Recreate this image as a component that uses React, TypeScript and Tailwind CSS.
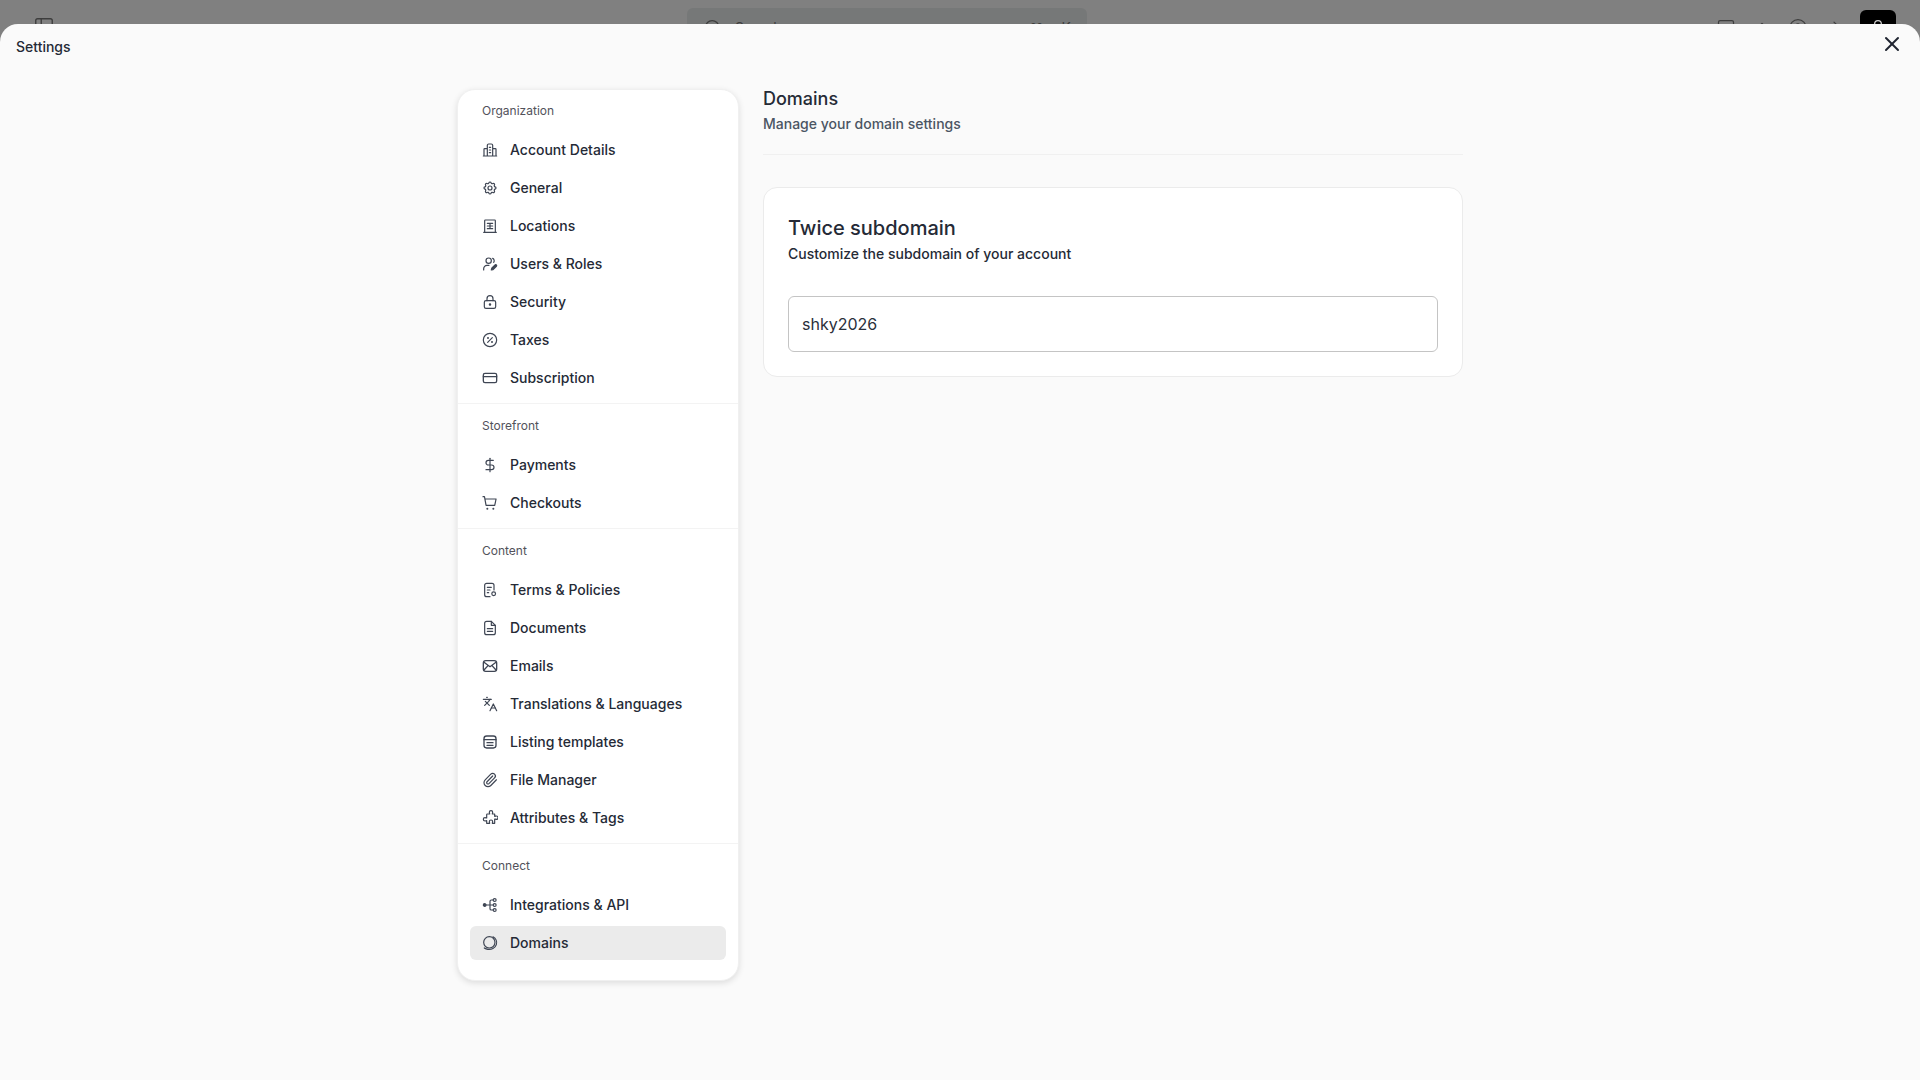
import type { ReactNode } from 'react';
import { Languages, Paperclip, DollarSign, Search, X, PanelLeft, SquarePlus, CircleHelp, ArrowRight, ChevronsUpDown, User } from 'lucide-react';

function Icon({ children, sw = 1.8 }: { children: ReactNode; sw?: number }) {
  return (
    <svg viewBox="0 0 24 24" fill="none" stroke="currentColor" strokeWidth={sw} strokeLinecap="round" strokeLinejoin="round" className="w-4 h-4 shrink-0">
      {children}
    </svg>
  );
}

const sections: { label: string; items: { name: string; icon: ReactNode }[] }[] = [
  {
    label: 'Organization',
    items: [
      { name: 'Account Details', icon: <Icon><path d="M2 21h20M8 21V5a2 2 0 0 1 2-2h4a2 2 0 0 1 2 2v16M8 10H4a1 1 0 0 0-1 1v10M16 10h4a1 1 0 0 1 1 1v10M11 8h2M11 12h2M11 16h2" /></Icon> },
      { name: 'General', icon: <Icon><path d="M10.325 4.317c.426-1.756 2.924-1.756 3.35 0a1.724 1.724 0 0 0 2.573 1.066c1.543-.94 3.31.826 2.37 2.37a1.724 1.724 0 0 0 1.065 2.572c1.756.426 1.756 2.924 0 3.35a1.724 1.724 0 0 0-1.066 2.573c.94 1.543-.826 3.31-2.37 2.37a1.724 1.724 0 0 0-2.572 1.065c-.426 1.756-2.924 1.756-3.35 0a1.724 1.724 0 0 0-2.573-1.066c-1.543.94-3.31-.826-2.37-2.37a1.724 1.724 0 0 0-1.065-2.572c-1.756-.426-1.756-2.924 0-3.35a1.724 1.724 0 0 0 1.066-2.573c-.94-1.543.826-3.31 2.37-2.37 1 .608 2.296.07 2.572-1.065z" /><circle cx="12" cy="12" r="3" /></Icon> },
      { name: 'Locations', icon: <Icon><path d="M2.5 21.5h19M4 21V4a1 1 0 0 1 1-1h14a1 1 0 0 1 1 1v17M8 8h8M8 12h8M8 16h8M12 8v8" /></Icon> },
      { name: 'Users & Roles', icon: <Icon><circle cx="10" cy="7" r="4" /><path d="M2.5 21v-2a5 5 0 0 1 5-5h3M16 3.5a4 4 0 0 1 1.5 6" /><path d="M14 21l.6-2.6 5-5a1.4 1.4 0 0 1 2 2l-5 5z" fill="currentColor" /></Icon> },
      { name: 'Security', icon: <Icon><rect x="3.5" y="10" width="17" height="11.5" rx="2.5" /><path d="M7.500 10V7a4.500 4.500 0 0 1 9 0v3" /><circle cx="12" cy="15.75" r="1" fill="currentColor" /></Icon> },
      { name: 'Taxes', icon: <Icon><circle cx="12" cy="12" r="10" /><path d="M15.5 8.5l-7 7" /><circle cx="9" cy="9" r=".6" fill="currentColor" /><circle cx="15" cy="15" r=".6" fill="currentColor" /></Icon> },
      { name: 'Subscription', icon: <Icon sw={2}><rect x="2" y="5" width="20" height="14" rx="2.5" /><path d="M2 10h20" /></Icon> },
    ],
  },
  {
    label: 'Storefront',
    items: [
      { name: 'Payments', icon: <DollarSign className="w-4 h-4 shrink-0" strokeWidth={1.8} /> },
      { name: 'Checkouts', icon: <Icon><path d="M1.5 2.500h2.200l2.400 13h13l2-9.500H4.500" /><circle cx="8" cy="20.5" r=".6" fill="currentColor" /><circle cx="17" cy="20.5" r=".6" fill="currentColor" /></Icon> },
    ],
  },
  {
    label: 'Content',
    items: [
      { name: 'Terms & Policies', icon: <Icon><path d="M12 22H7a3 3 0 0 1-3-3V5a3 3 0 0 1 3-3h8a3 3 0 0 1 3 3v7M8 8h6M8 12h4M8 16h2" /><circle cx="17.5" cy="17.5" r="2.8" /></Icon> },
      { name: 'Documents', icon: <Icon><path d="M14 2H7a3 3 0 0 0-3 3v14a3 3 0 0 0 3 3h10a3 3 0 0 0 3-3V8z" /><path d="M14 2v6h6M8 13h8M8 17h8" /></Icon> },
      { name: 'Emails', icon: <Icon sw={2}><rect x="2" y="4" width="20" height="16" rx="3.5" /><path d="M3 6.500l9 6.500 9-6.500M3 18l6-6.500M21 18l-6-6.500" /></Icon> },
      { name: 'Translations & Languages', icon: <Languages className="w-4 h-4 shrink-0" strokeWidth={1.8} /> },
      { name: 'Listing templates', icon: <Icon sw={2}><rect x="3" y="3" width="18" height="18" rx="4" /><path d="M3 8.500h18M7.500 13h9M7.500 17h9" /></Icon> },
      { name: 'File Manager', icon: <Paperclip className="w-4 h-4 shrink-0" strokeWidth={1.8} /> },
      { name: 'Attributes & Tags', icon: <Icon><path d="M8 6h3.500c0-1-.5-1.500-.5-2.500a2.500 2.500 0 0 1 5 0c0 1-.5 1.500-.5 2.500H19v3.500c1 0 1.500-.5 2.500-.5a2.500 2.500 0 0 1 0 5c-1 0-1.500-.5-2.500-.5V20h-3.500c0-1 .5-1.500.5-2.500a2.500 2.500 0 0 0-5 0c0 1 .5 1.500.5 2.500H7v-4c-1 0-1.500.5-2.500.5a2.500 2.500 0 0 1 0-5c1 0 1.500.5 2.500.5V7a1 1 0 0 1 1-1z" /></Icon> },
    ],
  },
  {
    label: 'Connect',
    items: [
      { name: 'Integrations & API', icon: <Icon><circle cx="4" cy="12" r="2" fill="currentColor" /><circle cx="19" cy="4.5" r="2.2" /><circle cx="19" cy="12" r="2.2" /><circle cx="19" cy="19.5" r="2.2" /><path d="M6 12h10.800M16.800 4.500H14a2 2 0 0 0-2 2v11a2 2 0 0 0 2 2h2.800" /></Icon> },
      { name: 'Domains', icon: <Icon><circle cx="11" cy="11" r="8.5" /><path d="M16.500 2.800C21 5 23 10 21.500 14.500 20 19.500 14 22.500 8.500 21.500c-2-.5-4-1-5-2" /></Icon> },
    ],
  },
];

export default function App() {
  return (
    <div className="relative w-full h-screen overflow-hidden bg-[#808080] font-['Inter',sans-serif] antialiased">
      {/* app behind the modal, only its top edge shows */}
      <div className="flex items-start justify-between h-14 pl-[33px] pr-6 text-[#3d3d3d]">
        <div className="pt-[16px] w-[654px]">
          <PanelLeft className="w-[22px] h-[22px]" strokeWidth={1.5} />
        </div>
        <div className="flex items-center justify-between w-[400px] h-10 mt-2 px-4 rounded-md bg-[#767878] text-sm">
          <div className="flex items-center gap-3">
            <Search className="w-5 h-5" strokeWidth={1.5} />
            <span>Search</span>
          </div>
          <div className="flex gap-[18px]">
            <span>⌘</span>
            <span>K</span>
          </div>
        </div>
        <div className="flex items-start gap-4 ml-auto">
          <SquarePlus className="w-5 h-5 mt-[18px]" strokeWidth={1.5} />
          <ChevronsUpDown className="w-5 h-5 mt-5" strokeWidth={1.5} />
          <CircleHelp className="w-5 h-5 mt-[18px]" strokeWidth={1.5} />
          <ArrowRight className="w-5 h-5 mt-[18px]" strokeWidth={1.5} />
          <div className="flex justify-center w-9 h-9 mt-[10px] rounded-md bg-black pt-2 text-[#d0d0d0]">
            <User className="w-5 h-5" strokeWidth={1.5} />
          </div>
        </div>
      </div>

      {/* settings modal */}
      <div className="absolute inset-x-0 top-6 bottom-0 rounded-t-[18px] bg-[#fafafa]">
        <div className="flex items-start justify-between h-[65px] pl-4 pr-4">
          <p className="mt-[14px] text-sm leading-[18px] font-medium text-[#252a36]">Settings</p>
          <X className="w-6 h-6 mt-2 text-[#1f2430]" strokeWidth={2} />
        </div>

        <div className="flex justify-center gap-6">
          <aside className="w-[282px] h-[892px] rounded-[18px] border border-[#f0f0f0] bg-white shadow-[0_2px_6px_rgba(0,0,0,0.12)]">
            {sections.map((section, i) => (
              <div key={section.label} className={`px-3 pt-[13px] pb-2 ${i > 0 ? 'border-t border-[#f3f3f3] pt-[14px]' : ''}`}>
                <p className="px-3 mb-[14px] text-xs leading-4 text-[#52525b]">{section.label}</p>
                <div className="flex flex-col gap-1">
                  {section.items.map(item => (
                    <div
                      key={item.name}
                      className={`flex items-center gap-3 h-[34px] px-3 rounded-md text-sm font-medium text-[#252a36] ${item.name === 'Domains' ? 'bg-[#ebebeb]' : ''}`}
                    >
                      <span className="text-[#3f4654]">{item.icon}</span>
                      <span>{item.name}</span>
                    </div>
                  ))}
                </div>
              </div>
            ))}
          </aside>

          <main className="w-[700px] -mt-[2px]">
            <div className="pb-[18px] border-b border-[#f0f0f0]">
              <h2 className="text-lg leading-[24px] font-medium text-[#252a36]">Domains</h2>
              <p className="mt-[1px] text-sm leading-6 font-medium text-[#4b5563]">Manage your domain settings</p>
            </div>
            <div className="mt-8 h-[190px] p-6 rounded-[14px] border border-[#ebebeb] bg-white">
              <h3 className="mt-[2px] text-xl leading-7 font-medium text-[#252a36]">Twice subdomain</h3>
              <p className="text-sm leading-6 font-medium text-[#252a36]">Customize the subdomain of your account</p>
              <input
                readOnly
                value="shky2026"
                className="block w-full h-14 mt-[30px] px-[13px] rounded-md border border-[#c4c4c4] bg-white text-base text-[#2a2f3a] outline-none"
              />
            </div>
          </main>
        </div>
      </div>
    </div>
  );
}
